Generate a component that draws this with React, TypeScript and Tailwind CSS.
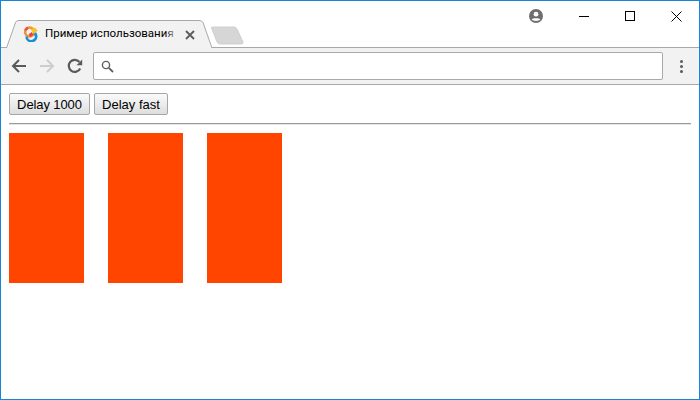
import React from "react";

function Favicon() {
  return (
    <svg width="16" height="16" viewBox="0 0 16 16" className="block">
      <circle cx="6.6" cy="6" r="4.5" fill="none" stroke="#f2913a" strokeWidth="2.6" />
      <path d="M2.4 4.4A4.5 4.5 0 0 1 5 1.8" fill="none" stroke="#e8553c" strokeWidth="2.6" />
      <path d="M3.6 10.4A4.8 4.8 0 0 0 13.2 10.4A4.8 4.8 0 0 0 11 6" fill="none" stroke="#1b8fd6" strokeWidth="2.6" />
      <path d="M7.5 3.4L12 1.6l2.6 3L11.5 8z" fill="#f7c325" />
      <path d="M5.6 8.2L8.8 6l1.4 3.2-3 1.8z" fill="#e8453c" />
      <path d="M10.6 8.4l1.6-1.4.8 2-1.6.8z" fill="#1b8fd6" />
    </svg>
  );
}

export default function App() {
  return (
    <div className="flex h-[400px] w-[700px] flex-col overflow-hidden border border-[#1a86d8] bg-white font-['Liberation_Sans',sans-serif]">
      {/* title bar */}
      <div className="flex h-[47px] shrink-0 items-end border-b border-[#a8a8a8]">
        <div className="relative mb-[-1px] ml-[5px] flex h-[28px] w-[207px] shrink-0 items-center pl-[17px] pr-[21px]">
          <svg width="207" height="28" viewBox="0 0 207 28" className="absolute left-0 top-0">
            <path d="M0.5 28 L9.5 2.5 Q10 0.5 13 0.5 L193 0.5 Q196 0.5 197 2.5 L206 28" fill="#f2f2f2" stroke="#a8a8a8" strokeWidth="1" />
          </svg>
          <div className="relative flex min-w-0 flex-1 items-center gap-[6px]">
            <Favicon />
            <div className="relative w-[134px] overflow-hidden whitespace-nowrap pb-[2px] font-['Roboto',sans-serif] text-[11.5px] leading-[16px] text-black">
              Пример использования
              <div className="absolute right-0 top-0 h-full w-[14px] bg-gradient-to-r from-transparent to-[#f2f2f2]" />
            </div>
          </div>
          <svg width="10" height="10" viewBox="0 0 10 10" className="absolute left-[179px] top-[10px]">
            <path d="M1 1L9 9M9 1L1 9" stroke="#5a5a5a" strokeWidth="1.8" />
          </svg>
        </div>
        <svg width="36" height="20" viewBox="0 0 36 20" className="relative mb-[1px] ml-[-3px] shrink-0">
          <path d="M1.5 2 Q1 1 3 1 L24 1 Q26 1 27 3 L33 16 Q33.5 18 31 18 L10 18 Q8 18 7 16 Z" fill="#d6d6d6" stroke="#cfcfcf" />
        </svg>
        <div className="flex-1 self-stretch">
          <div className="flex h-[30px] items-center justify-end">
            <svg width="14" height="14" viewBox="0 0 14 14" className="mr-[18px]">
              <circle cx="7" cy="7" r="7" fill="#6e6e6e" />
              <circle cx="7" cy="5.2" r="2.4" fill="#fff" />
              <path d="M2.6 10.6C3.6 8.8 10.4 8.8 11.4 10.6C10 12.4 4 12.4 2.6 10.6Z" fill="#fff" />
            </svg>
            <div className="flex w-[46px] justify-center">
              <div className="h-px w-[10px] bg-black" />
            </div>
            <div className="flex w-[46px] justify-center">
              <div className="size-[10px] border border-black" />
            </div>
            <div className="flex w-[46px] justify-center">
              <svg width="11" height="11" viewBox="0 0 11 11">
                <path d="M0.5 0.5L10.5 10.5M10.5 0.5L0.5 10.5" stroke="#000" strokeWidth="1" />
              </svg>
            </div>
          </div>
        </div>
      </div>
      {/* toolbar */}
      <div className="flex h-[37px] shrink-0 items-center border-b border-[#a8a8a8] bg-[#f2f2f2]">
        <svg width="16" height="16" viewBox="0 0 16 16" className="ml-[10px]">
          <path d="M15 8H2M8 2L2 8l6 6" fill="none" stroke="#5a5a5a" strokeWidth="2" />
        </svg>
        <svg width="16" height="16" viewBox="0 0 16 16" className="ml-[12px]">
          <path d="M1 8h13M8 2l6 6-6 6" fill="none" stroke="#cdcdcd" strokeWidth="2" />
        </svg>
        <svg width="16" height="16" viewBox="0 0 16 16" className="ml-[12px]">
          <path d="M13.2 10.5A6 6 0 1 1 12.4 4" fill="none" stroke="#5a5a5a" strokeWidth="2.2" />
          <path d="M9.5 7.2H15.2V1.5Z" fill="#5a5a5a" />
        </svg>
        <div className="ml-[10px] flex h-[28px] w-[570px] items-center rounded-[2px] border border-[#a9a9a9] bg-white pl-[7px]">
          <svg width="13" height="13" viewBox="0 0 13 13">
            <circle cx="5" cy="5" r="3.6" fill="none" stroke="#5f5f5f" strokeWidth="1.4" />
            <path d="M7.8 7.8L12 12" stroke="#5f5f5f" strokeWidth="1.8" />
          </svg>
        </div>
        <div className="ml-[17px] flex flex-col gap-[2px]">
          <div className="size-[3px] rounded-full bg-[#5a5a5a]" />
          <div className="size-[3px] rounded-full bg-[#5a5a5a]" />
          <div className="size-[3px] rounded-full bg-[#5a5a5a]" />
        </div>
      </div>
      {/* page */}
      <div className="flex flex-1 flex-col pl-[8px] pr-[8px] pt-[8px]">
        <div className="flex gap-[4px]">
          <button className="h-[22px] w-[81px] rounded-[2px] border border-[#a6a6a6] bg-gradient-to-b from-[#fafafa] to-[#dedede] text-[13px] leading-none tracking-[-0.1px] text-black">
            Delay 1000
          </button>
          <button className="h-[22px] w-[74px] rounded-[2px] border border-[#a6a6a6] bg-gradient-to-b from-[#fafafa] to-[#dedede] text-[13px] leading-none text-black">
            Delay fast
          </button>
        </div>
        <div className="mt-[8px] h-[2px] border-t border-b border-t-[#9a9a9a] border-b-[#e4e4e4]" />
        <div className="mt-[8px] flex gap-[24px]">
          <div className="h-[150px] w-[75px] bg-[#ff4500]" />
          <div className="h-[150px] w-[75px] bg-[#ff4500]" />
          <div className="h-[150px] w-[75px] bg-[#ff4500]" />
        </div>
      </div>
    </div>
  );
}
